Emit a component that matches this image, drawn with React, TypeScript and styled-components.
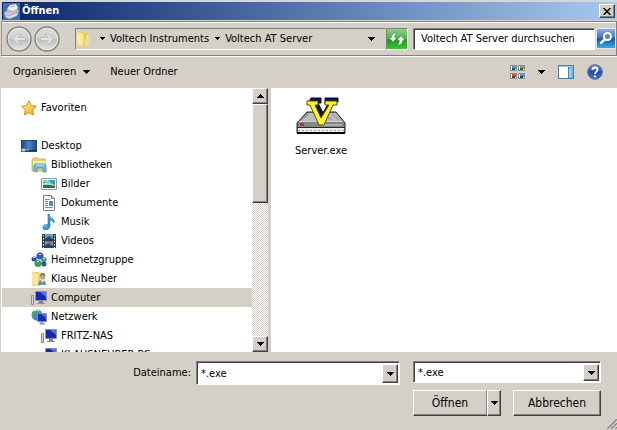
import React from "react";
import styled, { createGlobalStyle, css } from "styled-components";

const GlobalStyle = createGlobalStyle`
  * { box-sizing: border-box; }
  body { margin: 0; background: #d4d0c8; }
  body, button, input, select {
    font-family: "DejaVu Sans Condensed", "DejaVu Sans", sans-serif;
    font-size: 11px;
    line-height: 16px;
    color: #000;
  }
  button, input, select { margin: 0; padding: 0; border: 0; border-radius: 0; background: none; outline: none; }
  svg { display: block; flex: none; }
`;

const raised = css`
  background: #d4d0c8;
  border: 1px solid;
  border-color: #fff #404040 #404040 #fff;
  box-shadow: inset -1px -1px 0 #808080;
`;

const sunken = css`
  background: #fff;
  border: 1px solid;
  border-color: #808080 #fff #fff #808080;
  box-shadow: inset 1px 1px 0 #404040;
`;

const Dialog = styled.main`
  display: flex;
  flex-direction: column;
  height: 100vh;
  background: #d4d0c8;
  border-top: 2px solid #d3dac9;
  overflow: hidden;
`;

const TitleBar = styled.header`
  display: flex;
  align-items: center;
  gap: 2px;
  height: 18px;
  flex: none;
  margin-left: 2px;
  padding: 0 2px 0 1px;
  background: linear-gradient(90deg, #0a246a, #a6caf0);
`;

const Title = styled.h1`
  flex: 1;
  margin: 0;
  font-size: 11px;
  line-height: 16px;
  color: #fff;
`;

const CloseButton = styled.button`
  ${raised}
  display: grid;
  place-items: center;
  width: 16px;
  height: 14px;
`;

const NavBar = styled.nav`
  display: flex;
  align-items: center;
  height: 35px;
  flex: none;
  margin: 1px 0 0 1px;
  padding: 0 0 0 4px;
  border: 1px solid;
  border-color: #808080 #808080 #808080 #a09c94;
  box-shadow: inset 0 1px 0 #fff, 0 1px 0 #fff;
`;

const RoundButtons = styled.div`
  display: flex;
  gap: 2px;
  width: 69px;
  flex: none;
`;

const PlainButton = styled.button`
  display: grid;
  place-items: center;
  flex: none;
`;

const AddressBar = styled.div`
  display: flex;
  align-items: center;
  flex: 1;
  min-width: 0;
  height: 22px;
  border: 1px solid;
  border-color: #808080 #d4d0c8 #fff #808080;
`;

const Crumb = styled.button`
  display: flex;
  align-items: center;
  white-space: nowrap;
`;

const CrumbMark = styled.span`
  display: grid;
  place-items: center;
  width: 16px;
`;

const RootMark = styled(CrumbMark)`
  width: 18px;
  padding-left: 2px;
`;

const AddressEnd = styled.button`
  display: grid;
  place-items: center;
  width: 28px;
  margin-left: auto;
`;

const RefreshButton = styled.button`
  width: 22px;
  height: 22px;
  flex: none;
  border: 1px solid;
  border-color: #808080 #fff #fff #808080;
`;

const SearchField = styled.input`
  ${sunken}
  width: 182px;
  height: 22px;
  flex: none;
  margin: 0 1px 0 5px;
  padding: 0 7px;
  &::placeholder { color: #000; opacity: 1; }
`;

const Toolbar = styled.div`
  display: flex;
  align-items: center;
  height: 32px;
  flex: none;
  padding: 0 14px 0 13px;
`;

const TextButton = styled.button`
  display: flex;
  align-items: center;
  gap: 7px;
  margin-right: 20px;
`;

const ViewTools = styled.div`
  display: flex;
  align-items: center;
  gap: 13px;
  margin-left: auto;
`;

const Content = styled.div`
  display: flex;
  flex: 1;
  min-height: 0;
  padding-left: 1px;
`;

const TreePane = styled.aside`
  display: flex;
  width: 270px;
  flex: none;
  border-right: 3px solid #d4d0c8;
  background: #fff;
`;

const Tree = styled.ul`
  flex: 1;
  margin: 0;
  padding: 10px 0 0 1px;
  list-style: none;
  overflow: hidden;
`;

const TreeRow = styled.li<{ $level: number; $selected?: boolean; $gap?: boolean }>`
  display: flex;
  align-items: center;
  gap: 4px;
  height: 19px;
  margin-bottom: ${(p) => (p.$gap ? 19 : 0)}px;
  padding-left: ${(p) => 19 + p.$level * 10}px;
  background: ${(p) => (p.$selected ? "#d4d0c8" : "transparent")};
  white-space: nowrap;
`;

const ScrollBar = styled.div`
  display: flex;
  flex-direction: column;
  width: 16px;
  flex: none;
  background: repeating-conic-gradient(#fff 0 25%, #d4d0c8 0 50%) 0 0 / 2px 2px;
`;

const ScrollButton = styled.button`
  ${raised}
  display: grid;
  place-items: center;
  width: 16px;
  height: 16px;
  flex: none;
`;

const ScrollThumb = styled.div`
  ${raised}
  height: 99px;
  margin-bottom: auto;
`;

const FileArea = styled.section`
  flex: 1;
  min-width: 0;
  padding: 9px 8px;
  background: #fff;
`;

const FileItem = styled.button`
  display: flex;
  flex-direction: column;
  align-items: center;
  gap: 8px;
  width: 84px;
`;

const Footer = styled.form`
  display: grid;
  grid-template-columns: 1fr 204px 188px;
  grid-template-rows: 24px 26px;
  column-gap: 13px;
  row-gap: 5px;
  height: 78px;
  flex: none;
  padding: 9px 16px 0 0;
  position: relative;
`;

const FileNameGroup = styled.div`
  display: grid;
  grid-column: 1 / 3;
  grid-template-columns: 1fr 204px;
  align-items: center;
  gap: 5px;
`;

const FieldLabel = styled.label`
  text-align: right;
`;

const Combo = styled.div<{ $short?: boolean }>`
  ${sunken}
  display: flex;
  height: ${(p) => (p.$short ? 22 : 24)}px;
  align-self: start;
  padding: 2px 1px 1px 2px;
  & > input, & > select {
    flex: 1;
    min-width: 0;
    padding-left: 2px;
    appearance: none;
  }
`;

const ComboArrow = styled.button`
  ${raised}
  display: grid;
  place-items: center;
  width: 16px;
  flex: none;
`;

const Actions = styled.div`
  display: flex;
  grid-column: 3;
  justify-content: space-between;
`;

const SplitButton = styled.div`
  display: flex;
  width: 88px;
`;

const ActionButton = styled.button<{ $width: number }>`
  ${raised}
  display: grid;
  place-items: center;
  width: ${(p) => p.$width}px;
  font-size: 12px;
`;

const OpenButton = styled(ActionButton)`
  border-right-color: #808080;
  box-shadow: inset 0 -1px 0 #808080;
`;

const Grip = styled.svg`
  position: absolute;
  right: 0;
  bottom: 1px;
`;

const Arrow = ({ size = 7, up = false }: { size?: 5 | 7 | 9; up?: boolean }) => {
  const h = (size + 1) / 2;
  const rows = Array.from({ length: h }, (_, i) => i);
  return (
    <svg width={size} height={h} shapeRendering="crispEdges" aria-hidden="true">
      {rows.map((i) => (
        <rect key={i} x={i} y={up ? h - 1 - i : i} width={size - 2 * i} height="1" />
      ))}
    </svg>
  );
};

const Ico = ({ children, size = 16 }: { children: React.ReactNode; size?: number }) => (
  <svg width={size} height={size} viewBox="0 0 16 16" aria-hidden="true">{children}</svg>
);

const AppIcon = () => (
  <svg width="17" height="17" viewBox="0 0 17 17" aria-hidden="true">
    <rect width="17" height="17" fill="#4a69b4" />
    <path d="M1 10 5 6l9-1 2 3-2 5-7 3-4-1z" fill="#b9b6c4" />
    <path d="m4 6 3-4 6-1 2 4-5 3z" fill="#f1f0f5" />
    <path d="m2 10 7 0 5-2v4l-6 3-5-1z" fill="#dddbe3" />
    <path d="m3 12 5 0 6-3" stroke="#8d8da4" fill="none" />
    <path d="m7 4 5-1" stroke="#aaaabc" />
  </svg>
);

const RoundArrow = ({ forward = false }: { forward?: boolean }) => (
  <svg width="26" height="26" viewBox="0 0 26 26" aria-hidden="true">
    <defs>
      <linearGradient id={forward ? "rf" : "rb"} x1="0" y1="0" x2="0" y2="1">
        <stop stopColor="#dededc" /><stop offset=".48" stopColor="#cfcfcd" />
        <stop offset=".52" stopColor="#bdbdbb" /><stop offset="1" stopColor="#e8e8e6" />
      </linearGradient>
    </defs>
    <circle cx="13" cy="13" r="12" fill={`url(#${forward ? "rf" : "rb"})`} stroke="#858585" strokeWidth="1.5" />
    <circle cx="13" cy="13" r="10.7" fill="none" stroke="#e8e8e6" />
    <path
      d={forward ? "M6.5 11.500h8L11 8h3.500l5 5-5 5H11l3.500-3.500h-8z" : "M19.500 11.500h-8L15 8h-3.500l-5 5 5 5H15l-3.500-3.500h8z"}
      fill="#e2e2e0" stroke="#b4b4b2" strokeWidth=".7"
    />
  </svg>
);

const FolderIcon = () => (
  <Ico>
    <path d="M1 1h6l1 1h4l1 1v11l-4 1H2l-1-1z" fill="#f0d370" />
    <path d="m1 1 5 2v12l-5-2z" fill="#fbeaa0" />
    <path d="m7 3 4-1v11l-4 2z" fill="#eac452" />
    <path d="M10 4h3v10l-4 1V9l1-1z" fill="#f4df8b" />
    <path d="M7 3v11" stroke="#fff3bd" />
  </Ico>
);

const RefreshIcon = () => (
  <svg width="20" height="20" viewBox="0 0 20 20" aria-hidden="true">
    <defs><linearGradient id="gr" x1="0" y1="0" x2="0" y2="1"><stop stopColor="#8cce83" /><stop offset=".48" stopColor="#4db548" /><stop offset=".5" stopColor="#169a1b" /><stop offset="1" stopColor="#38c638" /></linearGradient></defs>
    <rect width="20" height="20" fill="url(#gr)" />
    <path d="M6 13 2 8.500h2.500Q4.500 4 10 4 7.500 5.500 7.500 8.500H10zM14 7l4 4.500h-2.500Q15.500 16 10 16q2.500-1.500 2.500-4.500H10z" fill="#fff" stroke="#1d7b20" strokeWidth=".4" />
  </svg>
);

const SearchIcon = () => (
  <svg width="20" height="21" viewBox="0 0 20 21" aria-hidden="true">
    <defs><linearGradient id="sr" x1="0" y1="0" x2="0" y2="1"><stop stopColor="#92b4e4" /><stop offset=".47" stopColor="#3a70c8" /><stop offset=".5" stopColor="#1453ae" /><stop offset="1" stopColor="#36b2df" /></linearGradient></defs>
    <rect x=".5" y=".5" width="19" height="20" fill="url(#sr)" stroke="#e0eaf5" />
    <path d="m9 11-4 4" stroke="#fff" strokeWidth="2.500" strokeLinecap="round" />
    <circle cx="11.500" cy="8.500" r="3.500" fill="#4b86d5" stroke="#fff" strokeWidth="2" />
  </svg>
);

const ViewsIcon = () => (
  <svg width="15" height="14" shapeRendering="crispEdges" aria-hidden="true">
    {[[0, 0, "#4c9fae", "#214f7f"], [8, 0, "#71a755", "#345e4a"], [0, 8, "#c05734", "#713a35"], [8, 8, "#598fca", "#203970"]].map(([x, y, a, b]) => (
      <g key={`${x}-${y}`} transform={`translate(${x} ${y})`}>
        <rect width="7" height="6" fill="#8a9196" />
        <rect x="1" y="1" width="5" height="4" fill="#fff" />
        <rect x="2" y="1" width="4" height="3" fill={a as string} />
        <rect x="2" y="3" width="3" height="2" fill={b as string} />
      </g>
    ))}
  </svg>
);

const PreviewIcon = () => (
  <svg width="16" height="14" aria-hidden="true">
    <rect x=".5" y=".5" width="15" height="13" fill="#fff" stroke="#477fab" />
    <rect x="1" y="1" width="14" height="1" fill="#9fc8e0" />
    <rect x="10" y="2" width="5" height="11" fill="#75bad9" />
    <path d="M10.500 2v11" stroke="#477fab" /><path d="M12 4v8" stroke="#c5e7f4" />
  </svg>
);

const HelpIcon = () => (
  <Ico>
    <defs><linearGradient id="he" x1="0" y1="0" x2="0" y2="1"><stop stopColor="#7d9bde" /><stop offset=".5" stopColor="#2149ad" /><stop offset="1" stopColor="#4d80d2" /></linearGradient></defs>
    <circle cx="8" cy="8" r="7.300" fill="url(#he)" stroke="#596890" />
    <path d="M5.500 6Q5.500 3.500 8 3.500t2.500 2.200Q10.500 7 9 7.900 8 8.500 8 10" fill="none" stroke="#fff" strokeWidth="1.800" />
    <circle cx="8" cy="12.300" r="1.100" fill="#fff" />
  </Ico>
);

const StarIcon = () => (
  <Ico>
    <defs><linearGradient id="st" x1="0" y1="0" x2="1" y2="1"><stop stopColor="#fff6a1" /><stop offset=".5" stopColor="#ffd14b" /><stop offset="1" stopColor="#f59a22" /></linearGradient></defs>
    <path d="m8 .8 2.300 4.700 5.100.8-3.700 3.600.9 5.100L8 12.600 3.400 15l.9-5.100L.6 6.300l5.100-.8z" fill="url(#st)" stroke="#d88b29" />
  </Ico>
);

const DesktopIcon = () => (
  <Ico>
    <defs><linearGradient id="de"><stop stopColor="#174887" /><stop offset=".5" stopColor="#4b83c5" /><stop offset="1" stopColor="#184a91" /></linearGradient></defs>
    <rect x=".5" y="2.500" width="15" height="11" fill="url(#de)" stroke="#26496f" />
    <path d="M1 12h14v1H1z" fill="#132e50" /><path d="M1 11h3v2H1zM5 12h3" stroke="#d6e9f0" fill="#8ec7cb" strokeWidth=".7" />
  </Ico>
);

const LibraryIcon = () => (
  <Ico>
    <path d="M1 3 2 1h5l1 1h6v12H1z" fill="#ecd276" stroke="#b89d51" strokeWidth=".7" />
    <path d="M2 4h12v6H2z" fill="#fae9a0" />
    <path d="M3 14V9q0-2 2-2h8q2 0 2 2v6h-3v-4H6v4z" fill="#73bce0" stroke="#4189b0" strokeWidth=".8" />
    <path d="M5 8h8" stroke="#c6f0ff" />
  </Ico>
);

const PictureIcon = () => (
  <Ico>
    <path d="M.5 2.500h15v11H.5z" fill="#fff" stroke="#8c9eaa" />
    <path d="M2 4h12v8H2z" fill="#3c98c8" /><path d="M2 5q5 0 12 4v3H2z" fill="#2c754b" />
    <path d="M2 7q5-1 12 2v1q-6-2-12-1z" fill="#c3e7cf" /><path d="M2 4h5l5 4-10-2z" fill="#8bd2ed" />
  </Ico>
);

const DocumentIcon = () => (
  <Ico>
    <path d="M2.500.5h8l3 3v12h-11z" fill="#fff" stroke="#738394" />
    <path d="M10.500.5v3h3" fill="#d9e6f0" stroke="#738394" />
    <path d="M4 4.500h5M4 6.500h3M4 8.500h3M4 10.500h3M4 12.500h8" stroke="#728ba7" />
    <path d="M8 6h4v5H8z" fill="#4d86c4" />
  </Ico>
);

const MusicIcon = () => (
  <Ico>
    <path d="M7 0h1c1 4 6 4 5 9-1-2-2-3-4-3v6c0 5-8 5-7 1 0-2 3-3 5-2z" fill="#3198d2" stroke="#1e70aa" strokeWidth=".6" />
    <path d="M3 13q1-2 3-1M8.500 2q1 2 3 3" stroke="#a2e2f8" fill="none" />
  </Ico>
);

const VideoIcon = () => (
  <Ico>
    <path d="M1 1h14v14H1z" fill="#303b43" /><path d="M4 1h8v6H4zM4 8h8v7H4z" fill="#669dc0" />
    <path d="m4 6 4-3 4 3v1H4zM4 13l3-3 5 3v2H4z" fill="#284768" /><path d="M5 8h6v2H8z" fill="#ad554c" />
    <path d="M2.500 2v13M13.500 2v13" stroke="#e4e9ec" strokeDasharray="1.500 1.500" />
  </Ico>
);

const HomegroupIcon = () => (
  <Ico>
    <path d="m4 7 5-3 4 7-6 1z" stroke="#6fa6b9" strokeWidth="2" fill="none" />
    <circle cx="3" cy="7" r="2.500" fill="#2553ad" /><circle cx="9" cy="4" r="3.500" fill="#3656bc" />
    <circle cx="13" cy="7.500" r="2.600" fill="#459d67" /><circle cx="7" cy="11.500" r="3.500" fill="#3d9d51" /><circle cx="13" cy="12" r="2.500" fill="#344fab" />
    <path d="M2 5.500h2M8 2.500h2M6 9.500h2M12 6.500h2" stroke="#c4e1ff" />
  </Ico>
);

const UserFolderIcon = () => (
  <Ico>
    <path d="M1 1h7l1 2v12H2l-1-1z" fill="#ebcf73" /><path d="m1 1 6 2v12l-6-2z" fill="#fae59a" />
    <circle cx="11.500" cy="6" r="2.800" fill="#c9a779" /><path d="M9 5q0-4 3-3 3 0 2 4l-2-2z" fill="#85805d" />
    <path d="M7 14q0-5 4-5 4 0 4 5z" fill="#5c9d94" /><path d="m10 9 1.500 3L13 9z" fill="#eee" />
  </Ico>
);

const ComputerIcon = () => (
  <Ico>
    <path d="M.5 5.500h2v9h-2z" fill="#d0d2d3" stroke="#8a8e93" />
    <path d="M4.500 1.500h11v9h-11z" fill="#1727af" stroke="#8994b5" />
    <path d="M9 2h6v5z" fill="#5270e0" /><path d="M8 11h4v2H8z" fill="#777e99" /><path d="M6 13h8v1H6z" fill="#8b90a2" />
  </Ico>
);

const NetworkIcon = () => (
  <Ico>
    <circle cx="6" cy="6" r="5.500" fill="#2f8cc7" />
    <path d="M1 4Q4-.5 7 1L6 4 3 5l1 4-3-2zM8 2l3 3-2 2-2-2z" fill="#48a75a" /><path d="M3 2q3-2 5 0" stroke="#d4f3f5" fill="none" />
    <path d="M6.500 4.500h9v8h-9z" fill="#182cb7" stroke="#8194bb" /><path d="M10 5h5v4z" fill="#5270e0" />
    <path d="M10 13h2v1H9v1h5" stroke="#7981a0" fill="none" />
  </Ico>
);

const ServerIcon = () => (
  <svg width="50" height="38" viewBox="0 0 50 38" aria-hidden="true">
    <path d="M11 15h29l9 11v10H1V26z" fill="#8f8f8f" stroke="#202020" />
    <path d="M12 16h28l6 8H5z" fill="#bdbdbd" />
    <path d="M2 25h46v5H2z" fill="#858585" />
    <path d="M3 24.500h44M26 28h20" stroke="#d0d0d0" />
    <path d="m36 17 7 6M31 20l5 3M8 21l5-4" stroke="#858585" />
    <path d="M4 27.500h4" stroke="#b51616" strokeWidth="2" /><path d="M10 27.500h5" stroke="#50b257" />
    <path d="M1 30.500h48" stroke="#282828" />
    <path d="M2 31h46v4H2z" fill="#ededed" />
    <path d="M2 33.500h46" stroke="#a0a0a0" strokeDasharray="2 2" />
    <path d="M1 36h48" stroke="#000" strokeWidth="2" />
    <path d="M15 1h10v5h-3l5 10 5-9h-3V1h13v4h-4L29 25h-5L16 7h-4z" fill="#081052" stroke="#080830" />
    <path d="M11 4h11v4h-3l6 13 8-13h-4V4h12v4h-4L28 28h-5L14 8h-3z" fill="#fff52a" stroke="#565008" />
  </svg>
);

const treeItems = [
  { name: "Favoriten", Icon: StarIcon, level: 0, gap: true },
  { name: "Desktop", Icon: DesktopIcon, level: 0 },
  { name: "Bibliotheken", Icon: LibraryIcon, level: 1 },
  { name: "Bilder", Icon: PictureIcon, level: 2 },
  { name: "Dokumente", Icon: DocumentIcon, level: 2 },
  { name: "Musik", Icon: MusicIcon, level: 2 },
  { name: "Videos", Icon: VideoIcon, level: 2 },
  { name: "Heimnetzgruppe", Icon: HomegroupIcon, level: 1 },
  { name: "Klaus Neuber", Icon: UserFolderIcon, level: 1 },
  { name: "Computer", Icon: ComputerIcon, level: 1, selected: true },
  { name: "Netzwerk", Icon: NetworkIcon, level: 1 },
  { name: "FRITZ-NAS", Icon: ComputerIcon, level: 2 },
  { name: "KLAUSNEUBER-PC", Icon: ComputerIcon, level: 2 },
];

export default function App() {
  return (
    <>
      <GlobalStyle />
      <Dialog>
        <TitleBar>
          <AppIcon />
          <Title>Öffnen</Title>
          <CloseButton aria-label="Schließen">
            <svg width="8" height="7" aria-hidden="true"><path d="m.5 0 7 7m0-7-7 7" stroke="#000" strokeWidth="1.500" /></svg>
          </CloseButton>
        </TitleBar>
        <NavBar>
          <RoundButtons>
            <PlainButton aria-label="Zurück"><RoundArrow /></PlainButton>
            <PlainButton aria-label="Vorwärts"><RoundArrow forward /></PlainButton>
          </RoundButtons>
          <AddressBar>
            <FolderIcon />
            <RootMark><Arrow size={5} /></RootMark>
            <Crumb>Voltech Instruments</Crumb>
            <CrumbMark><Arrow size={5} /></CrumbMark>
            <Crumb>Voltech AT Server</Crumb>
            <AddressEnd aria-label="Vorherige Orte"><Arrow /></AddressEnd>
          </AddressBar>
          <RefreshButton aria-label="Aktualisieren"><RefreshIcon /></RefreshButton>
          <SearchField aria-label="Suche" placeholder="Voltech AT Server durchsuchen" />
          <PlainButton aria-label="Suchen"><SearchIcon /></PlainButton>
        </NavBar>
        <Toolbar>
          <TextButton>Organisieren <Arrow /></TextButton>
          <TextButton>Neuer Ordner</TextButton>
          <ViewTools>
            <PlainButton aria-label="Ansicht ändern"><ViewsIcon /></PlainButton>
            <PlainButton aria-label="Weitere Optionen"><Arrow /></PlainButton>
            <PlainButton aria-label="Vorschaufenster"><PreviewIcon /></PlainButton>
            <PlainButton aria-label="Hilfe"><HelpIcon /></PlainButton>
          </ViewTools>
        </Toolbar>
        <Content>
          <TreePane>
            <Tree>
              {treeItems.map(({ name, Icon, level, selected, gap }) => (
                <TreeRow key={name} $level={level} $selected={selected} $gap={gap}>
                  <Icon />
                  {name}
                </TreeRow>
              ))}
            </Tree>
            <ScrollBar>
              <ScrollButton aria-label="Nach oben"><Arrow up /></ScrollButton>
              <ScrollThumb />
              <ScrollButton aria-label="Nach unten"><Arrow /></ScrollButton>
            </ScrollBar>
          </TreePane>
          <FileArea>
            <FileItem><ServerIcon />Server.exe</FileItem>
          </FileArea>
        </Content>
        <Footer onSubmit={(e) => e.preventDefault()}>
          <FileNameGroup>
            <FieldLabel htmlFor="file-name">Dateiname:</FieldLabel>
            <Combo>
              <input id="file-name" defaultValue="*.exe" />
              <ComboArrow type="button" aria-label="Dateinamen anzeigen"><Arrow /></ComboArrow>
            </Combo>
          </FileNameGroup>
          <Combo $short>
            <select aria-label="Dateityp" defaultValue="*.exe"><option>*.exe</option></select>
            <ComboArrow type="button" aria-label="Dateitypen anzeigen"><Arrow /></ComboArrow>
          </Combo>
          <Actions>
            <SplitButton>
              <OpenButton $width={74}>Öffnen</OpenButton>
              <ActionButton $width={14} type="button" aria-label="Öffnen-Optionen"><Arrow /></ActionButton>
            </SplitButton>
            <ActionButton $width={88} type="button">Abbrechen</ActionButton>
          </Actions>
          <Grip width="11" height="11" aria-hidden="true">
            <path d="M0 11 11 0M4 11l7-7M8 11l3-3" stroke="#fff" />
            <path d="M1 11 11 1M5 11l6-6M9 11l2-2" stroke="#808080" strokeWidth="1.500" />
          </Grip>
        </Footer>
      </Dialog>
    </>
  );
}
